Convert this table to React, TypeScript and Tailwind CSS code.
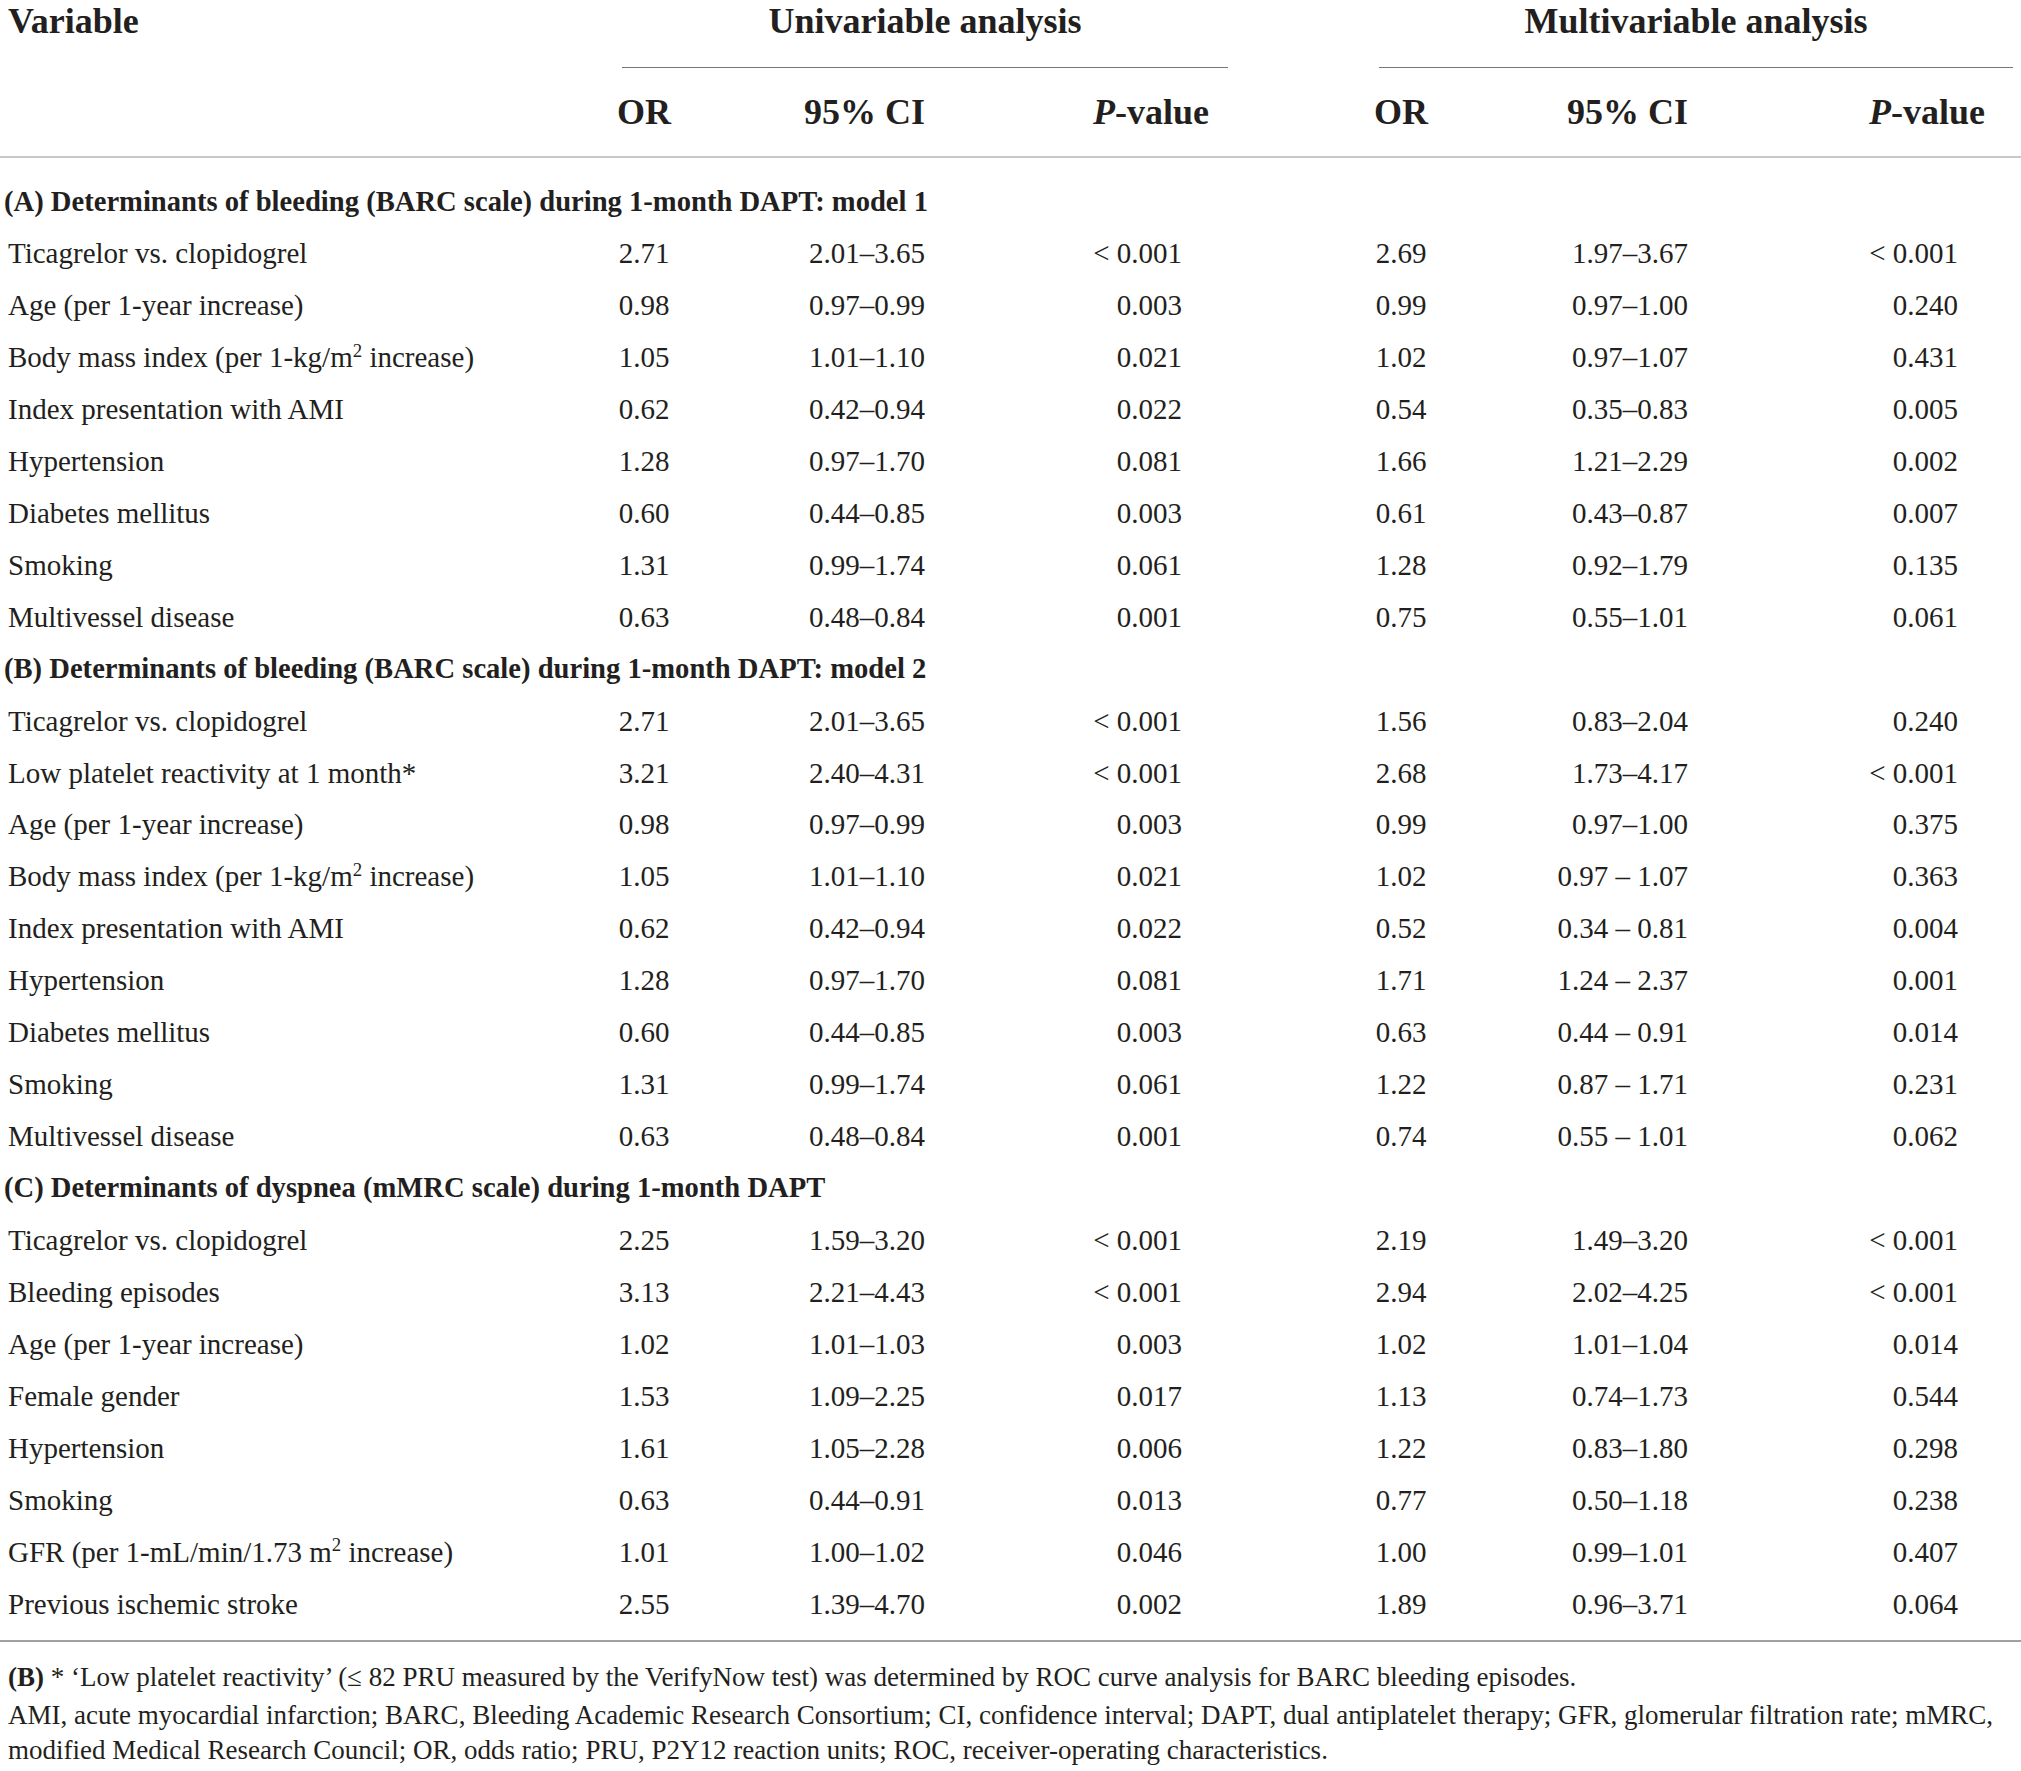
import React from 'react'

type Row = [React.ReactNode, string, string, string, string, string, string]

const m2 = (
  <>
    m<sup className="text-[0.65em] relative -top-[0.55em]">2</sup>
  </>
)

const sections: { title: string; rows: Row[] }[] = [
  {
    title: '(A) Determinants of bleeding (BARC scale) during 1-month DAPT: model 1',
    rows: [
      ['Ticagrelor vs. clopidogrel', '2.71', '2.01–3.65', '< 0.001', '2.69', '1.97–3.67', '< 0.001'],
      ['Age (per 1-year increase)', '0.98', '0.97–0.99', '0.003', '0.99', '0.97–1.00', '0.240'],
      [<>Body mass index (per 1-kg/{m2} increase)</>, '1.05', '1.01–1.10', '0.021', '1.02', '0.97–1.07', '0.431'],
      ['Index presentation with AMI', '0.62', '0.42–0.94', '0.022', '0.54', '0.35–0.83', '0.005'],
      ['Hypertension', '1.28', '0.97–1.70', '0.081', '1.66', '1.21–2.29', '0.002'],
      ['Diabetes mellitus', '0.60', '0.44–0.85', '0.003', '0.61', '0.43–0.87', '0.007'],
      ['Smoking', '1.31', '0.99–1.74', '0.061', '1.28', '0.92–1.79', '0.135'],
      ['Multivessel disease', '0.63', '0.48–0.84', '0.001', '0.75', '0.55–1.01', '0.061'],
    ],
  },
  {
    title: '(B) Determinants of bleeding (BARC scale) during 1-month DAPT: model 2',
    rows: [
      ['Ticagrelor vs. clopidogrel', '2.71', '2.01–3.65', '< 0.001', '1.56', '0.83–2.04', '0.240'],
      ['Low platelet reactivity at 1 month*', '3.21', '2.40–4.31', '< 0.001', '2.68', '1.73–4.17', '< 0.001'],
      ['Age (per 1-year increase)', '0.98', '0.97–0.99', '0.003', '0.99', '0.97–1.00', '0.375'],
      [<>Body mass index (per 1-kg/{m2} increase)</>, '1.05', '1.01–1.10', '0.021', '1.02', '0.97 – 1.07', '0.363'],
      ['Index presentation with AMI', '0.62', '0.42–0.94', '0.022', '0.52', '0.34 – 0.81', '0.004'],
      ['Hypertension', '1.28', '0.97–1.70', '0.081', '1.71', '1.24 – 2.37', '0.001'],
      ['Diabetes mellitus', '0.60', '0.44–0.85', '0.003', '0.63', '0.44 – 0.91', '0.014'],
      ['Smoking', '1.31', '0.99–1.74', '0.061', '1.22', '0.87 – 1.71', '0.231'],
      ['Multivessel disease', '0.63', '0.48–0.84', '0.001', '0.74', '0.55 – 1.01', '0.062'],
    ],
  },
  {
    title: '(C) Determinants of dyspnea (mMRC scale) during 1-month DAPT',
    rows: [
      ['Ticagrelor vs. clopidogrel', '2.25', '1.59–3.20', '< 0.001', '2.19', '1.49–3.20', '< 0.001'],
      ['Bleeding episodes', '3.13', '2.21–4.43', '< 0.001', '2.94', '2.02–4.25', '< 0.001'],
      ['Age (per 1-year increase)', '1.02', '1.01–1.03', '0.003', '1.02', '1.01–1.04', '0.014'],
      ['Female gender', '1.53', '1.09–2.25', '0.017', '1.13', '0.74–1.73', '0.544'],
      ['Hypertension', '1.61', '1.05–2.28', '0.006', '1.22', '0.83–1.80', '0.298'],
      ['Smoking', '0.63', '0.44–0.91', '0.013', '0.77', '0.50–1.18', '0.238'],
      [<>GFR (per 1-mL/min/1.73 {m2} increase)</>, '1.01', '1.00–1.02', '0.046', '1.00', '0.99–1.01', '0.407'],
      ['Previous ischemic stroke', '2.55', '1.39–4.70', '0.002', '1.89', '0.96–3.71', '0.064'],
    ],
  },
]

// column grid shared by sub-header and data rows
const cols = 'grid grid-cols-[560px_168px_197px_284px_108px_168px_203px_297px]'

export default function App() {
  return (
    <div className="w-[2021px] min-h-[1771px] bg-white text-[#231f20] font-['Liberation_Serif',serif]">
      {/* Group headers */}
      <div className="grid grid-cols-[622px_606px_151px_634px] h-[68px]">
        <div className="pl-2 pt-[2px] text-[36px] font-bold leading-[38px]">Variable</div>
        <div className="border-b border-[#777] text-center text-[36px] font-bold leading-[38px] pt-[2px]">
          Univariable analysis
        </div>
        <div />
        <div className="border-b border-[#777] text-center text-[36px] font-bold leading-[38px] pt-[2px]">
          Multivariable analysis
        </div>
      </div>

      {/* Sub headers */}
      <div className={`${cols} h-[90px] items-center border-b-2 border-[#c8c8c8] text-[36px] font-bold`}>
        <div />
        <div className="text-center">OR</div>
        <div className="text-right">95% CI</div>
        <div className="text-right">
          <i>P</i>-value
        </div>
        <div />
        <div className="text-center">OR</div>
        <div className="text-right">95% CI</div>
        <div className="text-right">
          <i>P</i>-value
        </div>
      </div>

      {/* Body */}
      <div className="pt-[18px] pb-[10px] border-b-2 border-[#a0a0a0] text-[29px]">
        {sections.map((s) => (
          <div key={s.title}>
            <div className="h-[51.95px] flex items-center pl-[4px] font-bold text-[28.6px]">{s.title}</div>
            {s.rows.map((r, i) => (
              <div key={i} className={`${cols} h-[51.95px] items-center`}>
                <div className="pl-2 whitespace-nowrap">{r[0]}</div>
                <div className="text-center">{r[1]}</div>
                <div className="text-right">{r[2]}</div>
                <div className="text-right pr-[27px]">{r[3]}</div>
                <div />
                <div className="text-center">{r[4]}</div>
                <div className="text-right">{r[5]}</div>
                <div className="text-right pr-[27px]">{r[6]}</div>
              </div>
            ))}
          </div>
        ))}
      </div>

      {/* Footnotes */}
      <div className="pl-2 pt-[18px] text-[27px] leading-[35px]">
        <p className="mb-[3px] whitespace-nowrap">
          <b>(B)</b> * ‘Low platelet reactivity’ (≤ 82 PRU measured by the VerifyNow test) was determined by ROC curve
          analysis for BARC bleeding episodes.
        </p>
        <p className="pr-2">
          AMI, acute myocardial infarction; BARC, Bleeding Academic Research Consortium; CI, confidence interval; DAPT,
          dual antiplatelet therapy; GFR, glomerular filtration rate; mMRC, modified Medical Research Council; OR, odds
          ratio; PRU, P2Y12 reaction units; ROC, receiver-operating characteristics.
        </p>
      </div>
    </div>
  )
}
